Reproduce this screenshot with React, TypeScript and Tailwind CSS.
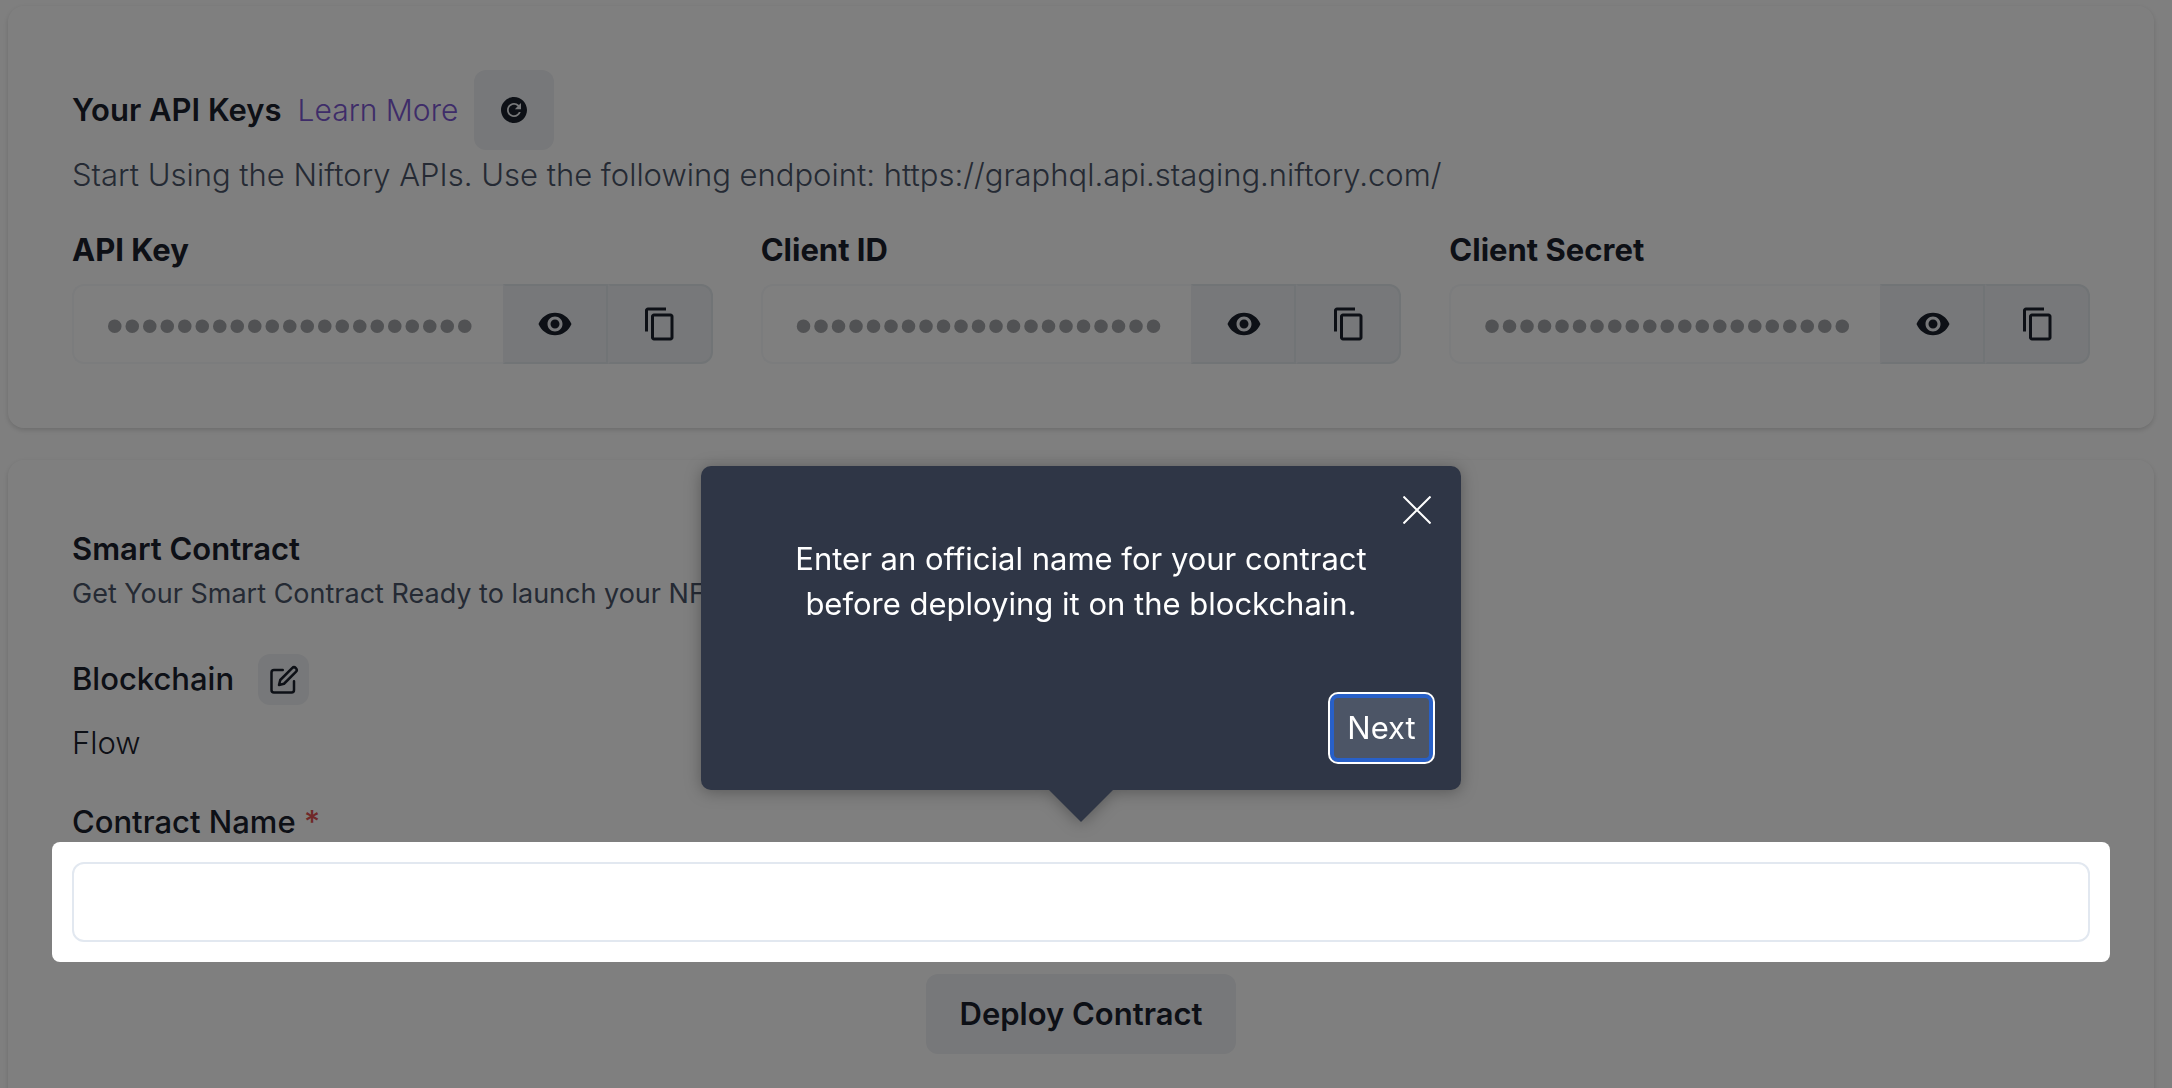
import { FiEdit } from "react-icons/fi";
import { IoMdRefreshCircle } from "react-icons/io";
import { MdContentCopy, MdRemoveRedEye } from "react-icons/md";

const keys = [
  { id: "api-key", label: "API Key" },
  { id: "client-id", label: "Client ID" },
  { id: "client-secret", label: "Client Secret" },
];

function KeyField({ id, label }: { id: string; label: string }) {
  return (
    <div className="min-w-0 flex-1">
      <label htmlFor={id} className="block leading-[48px] font-bold">
        {label}
      </label>
      <div className="mt-2.5 flex h-20">
        <input
          id={id}
          type="password"
          readOnly
          value="aaaaaaaaaaaaaaaaaaaaa"
          className="min-w-0 flex-1 rounded-l-xl border-2 border-r-0 border-[#f7f8fa] bg-white pt-1 pr-4 pl-8 font-['Liberation_Sans',sans-serif] text-[50px] text-[#a3a5a8] outline-none"
        />
        <button
          type="button"
          aria-label={`Show ${label}`}
          className="flex w-[105px] items-center justify-center border-2 border-[#e2e8ec] border-l-transparent bg-[#eff1f4]"
        >
          <MdRemoveRedEye className="size-9" />
        </button>
        <button
          type="button"
          aria-label={`Copy ${label}`}
          className="flex w-[105px] items-center justify-center rounded-r-xl border-2 border-[#e2e8ec] border-l-transparent bg-[#eff1f4]"
        >
          <MdContentCopy className="size-9" />
        </button>
      </div>
    </div>
  );
}

function TourTooltip() {
  return (
    <div
      role="dialog"
      aria-label="Contract name help"
      className="absolute bottom-full left-1/2 z-20 mb-5 w-[760px] -translate-x-1/2 drop-shadow-[0_2px_8px_rgba(0,0,0,0.3)]"
    >
      <div className="rounded-[10px] bg-[#2f3646] p-[30px] text-white">
        <button type="button" aria-label="Close" className="absolute top-[30px] right-[30px]">
          <svg viewBox="0 0 28 28" className="size-7" stroke="currentColor" strokeWidth="2">
            <path d="M0.5 0.5 27.5 27.5M27.5 0.5 0.5 27.5" />
          </svg>
        </button>
        <p className="px-5 py-10 text-center leading-[45px]">
          Enter an official name for your contract before deploying it on the blockchain.
        </p>
        <div className="mt-[26px] -mr-1 -mb-1 flex justify-end">
          <button
            type="button"
            className="h-[72px] w-[107px] rounded-[10px] border-2 border-white bg-[#4c5566] inset-ring-4 inset-ring-[#2860c8]"
          >
            Next
          </button>
        </div>
      </div>
      <svg viewBox="0 0 64 32" className="mx-auto h-8 w-16 text-[#2f3646]" fill="currentColor">
        <path d="M0 0H64L32 32Z" />
      </svg>
    </div>
  );
}

export default function App() {
  return (
    <main className="flex h-screen flex-col gap-8 overflow-hidden bg-white pt-1.5 pr-[18px] pl-2 font-['Inter',sans-serif] text-[31px] text-[#1a202c]">
      <section className="rounded-2xl p-16 shadow-[0_2px_6px_rgba(0,0,0,0.1),0_2px_4px_rgba(0,0,0,0.06)]">
        <div className="flex h-20 items-center gap-4">
          <h2 className="font-semibold">Your API Keys</h2>
          <a href="#learn" className="text-[30px] font-light text-[#7c59d2]">
            Learn More
          </a>
          <button
            type="button"
            aria-label="Refresh keys"
            className="flex size-20 items-center justify-center rounded-xl bg-[#eff1f4]"
          >
            <IoMdRefreshCircle className="size-8" />
          </button>
        </div>
        <p className="leading-[50px] font-light text-[#4a5568]">
          Start Using the Niftory APIs. Use the following endpoint: https://graphql.api.staging.niftory.com/
        </p>
        <div className="mt-[26px] flex gap-12">
          {keys.map((k) => (
            <KeyField key={k.id} id={k.id} label={k.label} />
          ))}
        </div>
      </section>

      <section className="h-[720px] shrink-0 rounded-2xl p-16 shadow-[0_2px_6px_rgba(0,0,0,0.1),0_2px_4px_rgba(0,0,0,0.06)]">
        <h2 className="leading-[50px] font-semibold">Smart Contract</h2>
        <p className="text-[27px] leading-10 font-normal text-[#4a5568]">
          Get Your Smart Contract Ready to launch your NFTs
        </p>
        <div className="mt-10 flex items-center gap-6">
          <h3 className="font-medium">Blockchain</h3>
          <button
            type="button"
            aria-label="Edit blockchain"
            className="flex size-[51px] items-center justify-center rounded-xl bg-[#eff1f4]"
          >
            <FiEdit className="size-[30px]" />
          </button>
        </div>
        <p className="mt-3.5 leading-[48px] font-light">Flow</p>
        <label htmlFor="contract-name" className="mt-[31px] block leading-[48px] font-medium">
          Contract Name <span className="text-[#e05050]">*</span>
        </label>
        <div className="relative z-10 -mx-5 -mt-1 rounded-lg p-5 shadow-[0_0_0_3000px_rgba(0,0,0,0.5)]">
          <input
            id="contract-name"
            type="text"
            className="block h-20 w-full rounded-xl border-2 border-[#e2e8f0] px-8 outline-none"
          />
          <TourTooltip />
        </div>
        <div className="mt-3 flex justify-center">
          <button type="button" className="h-20 rounded-xl bg-[#eff1f4] px-[34px] font-semibold">
            Deploy Contract
          </button>
        </div>
      </section>
    </main>
  );
}
